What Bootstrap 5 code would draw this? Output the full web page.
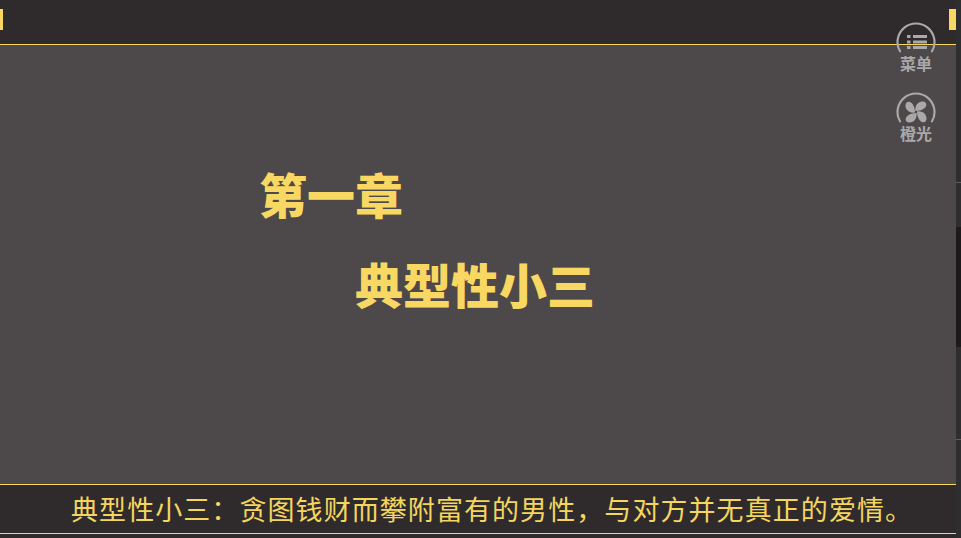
<!DOCTYPE html>
<html lang="zh">
<head>
<meta charset="utf-8">
<link rel="stylesheet" href="https://cdn.jsdelivr.net/npm/bootstrap@5.3.0/dist/css/bootstrap.min.css">
<style>
html,body{height:538px;overflow:hidden;background:#2f2b2c}
.shell{width:961px;height:538px}
.reader{width:956px;height:538px;position:relative}
.topbar{height:45px;background:#2f2b2c;border-bottom:1px solid #f8d95f}
.tab-l{width:3px;height:21px;background:#f8d862;margin-top:9px}
.tab-r{width:7px;height:21px;background:#f8d862;margin-top:9px}
.stage{height:439px;background:#4d494a;padding:120px 0 0 259px;font-family:"Noto Sans CJK SC",sans-serif}
.ch-title{font-size:48px;line-height:48px;font-weight:900;color:#f8d862;margin:4px 0 0 0}
.ch-sub{font-size:48px;line-height:48px;font-weight:900;color:#f8d862;margin:42px 0 0 96px}
.caption{height:50px;background:#2f2b2c;border-top:1px solid #f8d95f;border-bottom:1px solid #f8d95f;padding-left:71px;font-family:"Noto Sans CJK SC",sans-serif;font-size:27px;font-weight:400;letter-spacing:1.07px;line-height:48px;color:#f4d65f;white-space:nowrap}
.tools{position:absolute;left:896px;top:22px;width:40px;gap:13px}
.tool-item{width:40px;height:57px;position:relative;color:#aaa8a8}
.tool-item svg{display:block;width:40px;height:36px}
.tool-label{position:absolute;left:0;top:32px;width:40px;text-align:center;font-family:"Noto Sans CJK SC",sans-serif;font-size:16px;font-weight:700;line-height:19px}
.rail{width:5px;height:538px;background:#2e2e30}
.rail-a{height:183px;border-bottom:1px solid #5d5d5f}
.rail-b{height:44px}
.rail-thumb{height:120px;background:#1c1a1a}
.rail-c{height:93px;border-bottom:1px solid #5d5d5f}
</style>
</head>
<body>
<div class="shell d-flex">
  <div class="reader d-flex flex-column">
    <div class="topbar d-flex justify-content-between">
      <div class="tab-l"></div>
      <div class="tab-r"></div>
    </div>
    <div class="stage">
      <div class="ch-title">第一章</div>
      <div class="ch-sub">典型性小三</div>
    </div>
    <div class="caption">典型性小三：贪图钱财而攀附富有的男性，与对方并无真正的爱情。</div>
    <div class="tools d-flex flex-column">
      <div class="tool-item">
        <svg viewBox="0 0 40 36" fill="none">
          <path d="M4 29.300A18.500 18.500 0 1 1 36 29.300" stroke="currentColor" stroke-width="2.200" stroke-linecap="round"/>
          <g fill="currentColor">
            <rect x="11" y="13" width="3.500" height="3"/><rect x="11" y="18.500" width="3.500" height="3"/><rect x="11" y="24" width="3.500" height="3"/>
            <rect x="17" y="13" width="14" height="3"/><rect x="17" y="18.500" width="14" height="3"/><rect x="17" y="24" width="14" height="3"/>
          </g>
        </svg>
        <div class="tool-label">菜单</div>
      </div>
      <div class="tool-item">
        <svg viewBox="0 0 40 36" fill="none">
          <path d="M4 29.300A18.500 18.500 0 1 1 36 29.300" stroke="currentColor" stroke-width="2.200" stroke-linecap="round"/>
          <g fill="currentColor">
            <path d="M19.500 19C18.500 13.500 22.500 9 27 9.500C31 10 31.500 14 28 16.500C25.500 18.300 22.500 19 19.500 19Z"/>
            <path d="M19.500 19C18.500 13.500 22.500 9 27 9.500C31 10 31.500 14 28 16.500C25.500 18.300 22.500 19 19.500 19Z" transform="rotate(90 20 20)"/>
            <path d="M19.500 19C18.500 13.500 22.500 9 27 9.500C31 10 31.500 14 28 16.500C25.500 18.300 22.500 19 19.500 19Z" transform="rotate(180 20 20)"/>
            <path d="M19.500 19C18.500 13.500 22.500 9 27 9.500C31 10 31.500 14 28 16.500C25.500 18.300 22.500 19 19.500 19Z" transform="rotate(270 20 20)"/>
          </g>
        </svg>
        <div class="tool-label">橙光</div>
      </div>
    </div>
  </div>
  <div class="rail d-flex flex-column">
    <div class="rail-a"></div>
    <div class="rail-b"></div>
    <div class="rail-thumb"></div>
    <div class="rail-c"></div>
  </div>
</div>
<script src="https://cdn.jsdelivr.net/npm/bootstrap@5.3.0/dist/js/bootstrap.bundle.min.js"></script>
</body>
</html>
